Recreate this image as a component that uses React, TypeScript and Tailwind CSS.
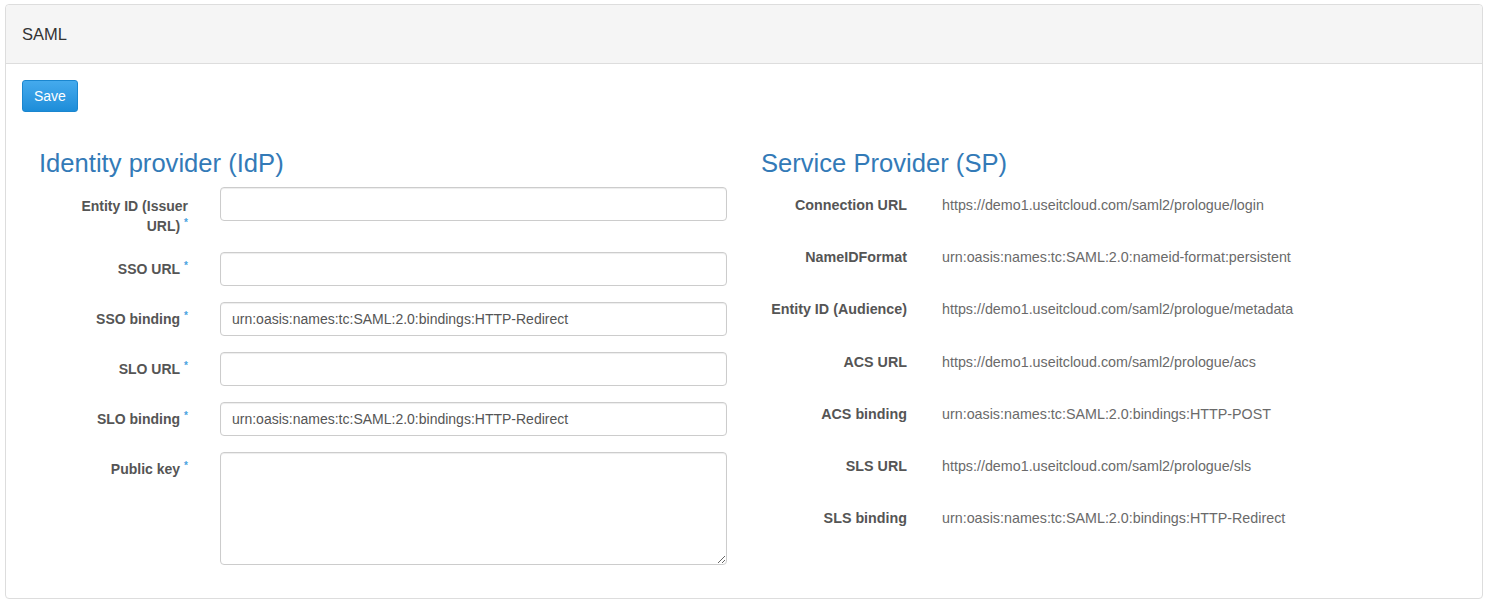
import React from 'react';

const font = { fontFamily: '"Liberation Sans", Arial, sans-serif' };

const Req = () => (
  <span className="ml-[4px] align-top text-[10px] leading-[14px] text-[#4aa3df]">*</span>
);

interface FieldProps {
  label: React.ReactNode;
  value?: string;
  twoLine?: boolean;
}

// one row of the IdP form: right-aligned bold label + bootstrap-ish input
const Field: React.FC<FieldProps> = ({ label, value, twoLine }) => (
  <div className="mb-[16px] flex">
    <label
      className={`w-[149px] shrink-0 text-right text-[14px] font-bold leading-[20px] text-[#555] ${
        twoLine ? 'pt-[9px]' : 'pt-[7px]'
      }`}
    >
      {label}
    </label>
    <input
      readOnly
      value={value ?? ''}
      className="ml-[32px] h-[34px] w-[507px] rounded-[4px] border border-[#ccc] bg-white px-[11px] text-[14px] text-[#555] shadow-[inset_0_1px_1px_rgba(0,0,0,0.075)] outline-none"
    />
  </div>
);

const spRows: [string, string][] = [
  ['Connection URL', 'https://demo1.useitcloud.com/saml2/prologue/login'],
  ['NameIDFormat', 'urn:oasis:names:tc:SAML:2.0:nameid-format:persistent'],
  ['Entity ID (Audience)', 'https://demo1.useitcloud.com/saml2/prologue/metadata'],
  ['ACS URL', 'https://demo1.useitcloud.com/saml2/prologue/acs'],
  ['ACS binding', 'urn:oasis:names:tc:SAML:2.0:bindings:HTTP-POST'],
  ['SLS URL', 'https://demo1.useitcloud.com/saml2/prologue/sls'],
  ['SLS binding', 'urn:oasis:names:tc:SAML:2.0:bindings:HTTP-Redirect'],
];

export default function App() {
  return (
    <div className="min-h-screen bg-white pb-[5px] pl-[5px] pr-[7px] pt-[4px]" style={font}>
      <div className="rounded-[4px] border border-[#ddd] bg-white">
        {/* Header */}
        <div className="flex h-[59px] items-center rounded-t-[4px] border-b border-[#ddd] bg-[#f5f5f5] px-[16px] text-[16.5px] text-[#333]">
          SAML
        </div>

        {/* Body */}
        <div className="px-[16px] pb-[33px] pt-[16px]">
          <button className="h-[32px] rounded-[3px] border border-[#1a86cf] bg-gradient-to-b from-[#44aaed] to-[#1c8dd9] px-[11px] text-[14px] text-white">
            Save
          </button>

          <div className="mt-[37px] flex">
            {/* IdP column */}
            <div className="w-[722px] pl-[17px]">
              <h3 className="mb-[10px] text-[25.6px] leading-[28px] text-[#337ab7]">Identity provider (IdP)</h3>
              <Field
                twoLine
                label={
                  <>
                    Entity ID (Issuer
                    <br />
                    URL)
                    <Req />
                  </>
                }
              />
              <Field label={<>SSO URL<Req /></>} />
              <Field label={<>SSO binding<Req /></>} value="urn:oasis:names:tc:SAML:2.0:bindings:HTTP-Redirect" />
              <Field label={<>SLO URL<Req /></>} />
              <Field label={<>SLO binding<Req /></>} value="urn:oasis:names:tc:SAML:2.0:bindings:HTTP-Redirect" />
              <div className="flex">
                <label className="w-[149px] shrink-0 pt-[7px] text-right text-[14px] font-bold leading-[20px] text-[#555]">
                  Public key<Req />
                </label>
                <textarea
                  readOnly
                  className="ml-[32px] h-[113px] w-[507px] rounded-[4px] border border-[#ccc] bg-white px-[11px] py-[6px] text-[14px] text-[#555] shadow-[inset_0_1px_1px_rgba(0,0,0,0.075)] outline-none"
                />
              </div>
            </div>

            {/* SP column */}
            <div className="flex-1 pl-[17px]">
              <h3 className="mb-[18px] text-[25.6px] leading-[28px] text-[#337ab7]">Service Provider (SP)</h3>
              {spRows.map(([k, v]) => (
                <div key={k} className="flex h-[52.2px] text-[14.3px] leading-[20px]">
                  <div className="w-[146px] shrink-0 text-right font-bold text-[#555]">{k}</div>
                  <div className="ml-[35px] text-[#6a6a6a]">{v}</div>
                </div>
              ))}
            </div>
          </div>
        </div>
      </div>
    </div>
  );
}
